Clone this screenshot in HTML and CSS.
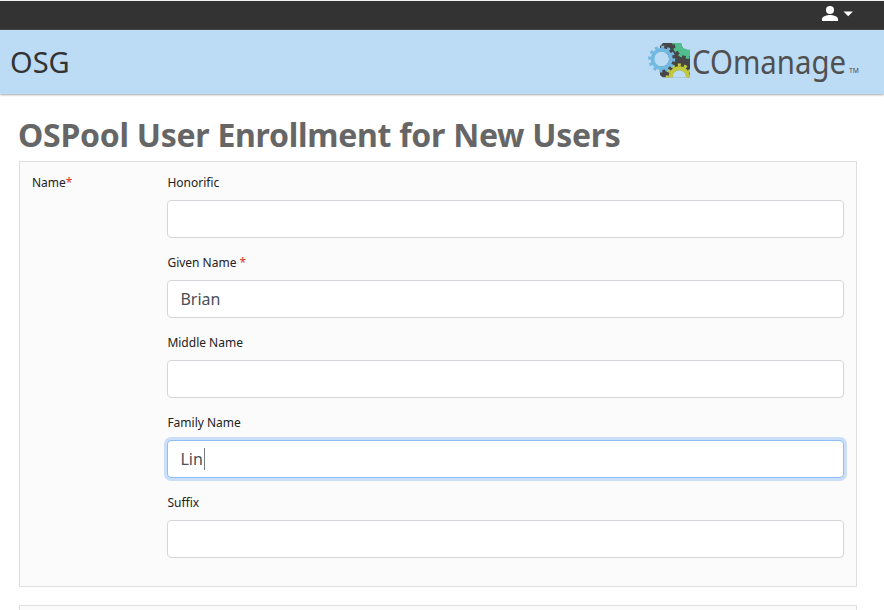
FILE: index.html
```html
<!DOCTYPE html>
<html lang="en">
<head>
<meta charset="utf-8">
<title>OSPool User Enrollment for New Users</title>
<link rel="stylesheet" href="styles.css">
</head>
<body>
<nav class="topbar">
  <svg class="user-menu" width="34" height="18" viewBox="0 0 34 18" fill="#fff">
    <circle cx="10" cy="5" r="4"/>
    <path d="M2 16v-2c0-2.700 5.300-4 8-4s8 1.300 8 4v2z"/>
    <path d="M23.500 6.500h9.400l-4.700 4.800z"/>
  </svg>
</nav>
<header class="banner">
  <div class="org">OSG</div>
  <svg class="logo" width="214" height="48" viewBox="0 0 214 48">
    <defs>
      <clipPath id="tile"><path d="M0 1H42V35.500H0z"/></clipPath>
    </defs>
    <g clip-path="url(#tile)" fill="none">
      <path fill="#464648" d="M15 1H42V35.500H15L12 33V4z"/>
      <circle cx="40" cy="1" r="7" fill="#bcdcf5"/>
      <circle cx="40" cy="1" r="10" stroke="#52bd8c" stroke-width="6.500"/>
      <circle cx="40" cy="1" r="14.300" stroke="#52bd8c" stroke-width="3" pathLength="24" stroke-dasharray="1 1" stroke-dashoffset=".4"/>
      <circle cx="31.300" cy="35" r="7" fill="#bcdcf5"/>
      <circle cx="31.300" cy="35" r="8.700" stroke="#c3c93e" stroke-width="4"/>
      <circle cx="31.300" cy="35" r="12" stroke="#c3c93e" stroke-width="3.200" pathLength="24" stroke-dasharray="1 1" stroke-dashoffset=".5"/>
      <circle cx="13.700" cy="17" r="7.500" fill="#bcdcf5"/>
      <circle cx="13.700" cy="17" r="9.100" stroke="#71b9e1" stroke-width="3.600"/>
      <circle cx="13.700" cy="17" r="12" stroke="#71b9e1" stroke-width="3" pathLength="24" stroke-dasharray="1 1" stroke-dashoffset=".2"/>
    </g>
    <text class="wordmark" x="44" y="32" textLength="154" lengthAdjust="spacingAndGlyphs">COmanage</text>
    <text class="tm" x="201" y="31" textLength="10" lengthAdjust="spacingAndGlyphs">TM</text>
  </svg>
</header>
<main>
  <h1>OSPool User Enrollment for New Users</h1>
  <form>
    <section class="panel">
      <div class="group-label">Name<span class="required">*</span></div>
      <div class="fields">
        <label>Honorific<input type="text"></label>
        <label>Given Name <span class="required">*</span><input type="text" value="Brian"></label>
        <label>Middle Name<input type="text"></label>
        <label class="active">Family Name<input type="text" value="Lin"><span class="caret"></span></label>
        <label>Suffix<input type="text"></label>
      </div>
    </section>
    <section class="panel next"></section>
  </form>
</main>
</body>
</html>
```
FILE: styles.css
```css
* { box-sizing: border-box; }
body {
  margin: 0;
  background: #fff;
  color: #222;
  font-family: "Noto Sans", sans-serif;
  font-size: 12px;
}
.topbar {
  height: 30px;
  padding: 4px 30px 0 0;
  display: flex;
  justify-content: flex-end;
  background: #333;
  border-top: 1px solid #f2f2f2;
  border-bottom: 1px solid #44484b;
}
.user-menu { display: block; }
.banner {
  height: 64px;
  padding: 0 22px 0 10px;
  display: flex;
  justify-content: space-between;
  background: #bcdcf5;
  box-shadow: 0 1px 2px rgba(0, 0, 0, .35);
}
.org {
  color: #333;
  font-size: 29px;
  line-height: 64px;
}
.logo { margin-top: 12px; overflow: visible; }
.wordmark { font: 32px "Noto Sans", sans-serif; fill: #505050; }
.tm { font: 7px "Noto Sans", sans-serif; fill: #505050; }
main { padding: 22px 27px 0 19px; }
h1 {
  margin: 0 0 0 -1px;
  height: 45px;
  color: #666;
  font-size: 32px;
  line-height: 38px;
  font-weight: 700;
  letter-spacing: -.27px;
  white-space: nowrap;
}
.panel {
  height: 426px;
  margin-bottom: 18px;
  padding: 12px;
  display: flex;
  background: #fbfbfb;
  border: 1px solid #dfdfdf;
}
.panel.next {
  height: 5px;
  margin: 0;
  padding: 0;
  border-bottom: 0;
}
.group-label { width: 135.4px; line-height: 18px; }
.fields { flex: 1; }
label {
  display: block;
  position: relative;
  height: 80px;
  line-height: 18px;
}
.required { color: #d93025; }
input {
  display: block;
  width: 100%;
  height: 38px;
  margin-top: 8px;
  padding: 0 12px;
  border: 1px solid #d3d6da;
  border-radius: 4px;
  background: #fff;
  color: #495057;
  font: 16px "Noto Sans", sans-serif;
  outline: none;
}
.active input {
  border-color: #8fbdf5;
  box-shadow: 0 0 0 3px #cbdefa;
}
.caret {
  position: absolute;
  left: 36.5px;
  top: 34px;
  width: 1px;
  height: 22px;
  background: #777b82;
}
```
